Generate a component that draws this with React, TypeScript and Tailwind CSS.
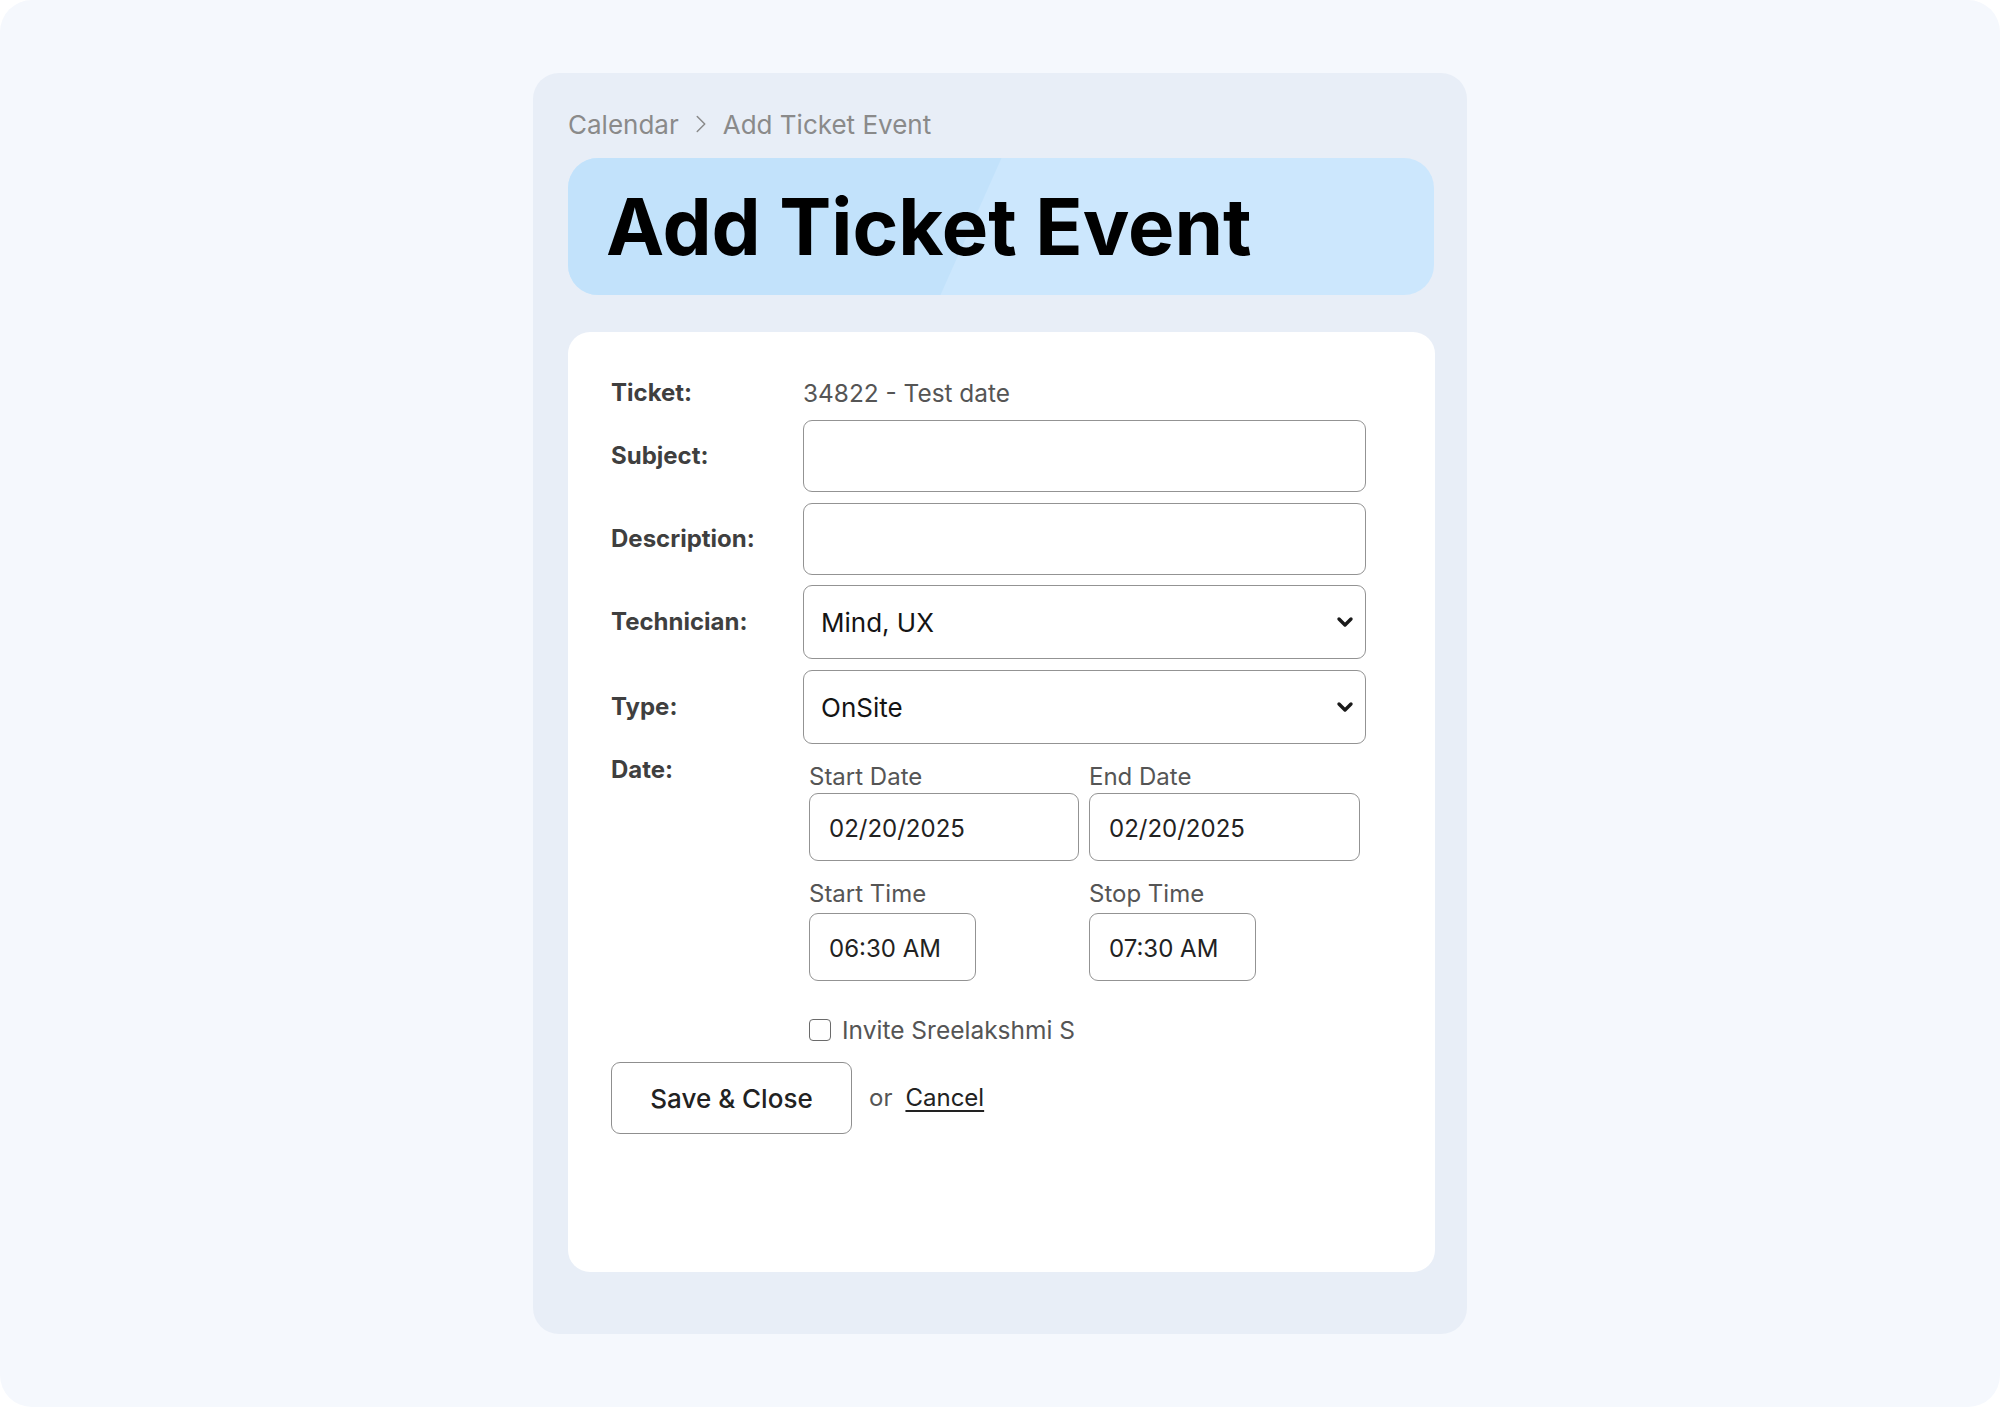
import { ChevronDown, ChevronRight } from 'lucide-react';

const labelCls = 'w-[192px] shrink-0 text-[24px] font-bold text-[#3f3f3f]';
const boxCls = 'h-full w-[563px] rounded-[9px] border-[1.5px] border-[#939393] bg-white';

const SelectBox = ({ value }: { value: string }) => (
  <div className={`${boxCls} flex items-center justify-between pl-[17px] pr-[8px]`}>
    <span className="text-[26px] text-[#141414]">{value}</span>
    <ChevronDown size={24} strokeWidth={3.4} className="text-[#1a1a1a]" />
  </div>
);

const SmallBox = ({ value, w }: { value: string; w: string }) => (
  <div className={`${w} flex h-[68px] items-center rounded-[9px] border-[1.5px] border-[#939393] pl-[19px] pt-[4px] text-[24px] text-[#222]`}>
    {value}
  </div>
);

const App = () => {
  return (
    <div className="min-h-screen bg-white" style={{ fontFamily: 'Inter, "Noto Sans", sans-serif' }}>
      <div className="flex h-[1407px] justify-center rounded-[32px] bg-[#f5f8fd] pt-[73px]">
        <div className="flex h-[1261px] w-[934px] flex-col rounded-[26px] bg-[#e8eef7] px-[35px] pt-[34px]">
          {/* breadcrumb */}
          <div className="flex h-[34px] items-center gap-[7px] text-[26px] text-[#8a8a8a]">
            <span>Calendar</span>
            <ChevronRight size={30} strokeWidth={1.2} className="text-[#8a8a8a]" />
            <span>Add Ticket Event</span>
          </div>

          {/* title */}
          <div className="relative mt-[17px] flex h-[137px] w-[866px] items-center overflow-hidden rounded-[30px] bg-[#cce7fd] pl-[38px]">
            <div className="absolute inset-y-0 left-[-100px] w-[503px] -skew-x-[24deg] bg-[#c2e2fb]" />
            <h1 className="relative text-[78px] font-bold leading-none text-black">Add Ticket Event</h1>
          </div>

          {/* form card */}
          <div className="mt-[37px] flex h-[940px] w-[867px] flex-col rounded-[22px] bg-white pl-[43px] pt-[41px]">
            <div className="flex h-[40px] items-center">
              <span className={labelCls}>Ticket:</span>
              <span className="text-[24.4px] text-[#555]">34822 - Test date</span>
            </div>

            <div className="mt-[7px] flex h-[72px] items-center">
              <span className={labelCls}>Subject:</span>
              <div className={boxCls} />
            </div>

            <div className="mt-[11px] flex h-[72px] items-center">
              <span className={labelCls}>Description:</span>
              <div className={boxCls} />
            </div>

            <div className="mt-[10px] flex h-[74px] items-center">
              <span className={labelCls}>Technician:</span>
              <SelectBox value="Mind, UX" />
            </div>

            <div className="mt-[11px] flex h-[74px] items-center">
              <span className={labelCls}>Type:</span>
              <SelectBox value="OnSite" />
            </div>

            <div className="mt-[11px] flex">
              <span className={`${labelCls} h-[30px] leading-[30px]`}>Date:</span>
              <div className="flex flex-col pl-[6px] pt-[7px]">
                <div className="flex gap-[10px]">
                  <div className="flex w-[270px] flex-col">
                    <span className="h-[30px] text-[24px] leading-[30px] text-[#555]">Start Date</span>
                    <div className="mt-[1px]">
                      <SmallBox value="02/20/2025" w="w-[270px]" />
                    </div>
                  </div>
                  <div className="flex w-[271px] flex-col">
                    <span className="h-[30px] text-[24px] leading-[30px] text-[#555]">End Date</span>
                    <div className="mt-[1px]">
                      <SmallBox value="02/20/2025" w="w-[271px]" />
                    </div>
                  </div>
                </div>
                <div className="mt-[18px] flex gap-[10px]">
                  <div className="flex w-[270px] flex-col">
                    <span className="h-[30px] text-[24px] leading-[30px] text-[#555]">Start Time</span>
                    <div className="mt-[4px]">
                      <SmallBox value="06:30 AM" w="w-[167px]" />
                    </div>
                  </div>
                  <div className="flex w-[271px] flex-col">
                    <span className="h-[30px] text-[24px] leading-[30px] text-[#555]">Stop Time</span>
                    <div className="mt-[4px]">
                      <SmallBox value="07:30 AM" w="w-[167px]" />
                    </div>
                  </div>
                </div>
                <label className="mt-[34px] flex h-[30px] items-center gap-[11px]">
                  <span className="h-[22px] w-[22px] rounded-[4px] border-[1.5px] border-[#6b6b6b] bg-white" />
                  <span className="text-[24.5px] text-[#555]">Invite Sreelakshmi S</span>
                </label>
              </div>
            </div>

            <div className="mt-[17px] flex items-center">
              <button className="flex h-[72px] w-[241px] items-center justify-center rounded-[9px] border-[1.5px] border-[#8f8f8f] bg-white text-[26px] font-medium text-[#222]">
                Save &amp; Close
              </button>
              <span className="ml-[17px] text-[24px] text-[#555]">or</span>
              <a className="ml-[13px] text-[24px] text-[#222] underline underline-offset-[4px]" href="#">
                Cancel
              </a>
            </div>
          </div>
        </div>
      </div>
    </div>
  );
};

export default App;
